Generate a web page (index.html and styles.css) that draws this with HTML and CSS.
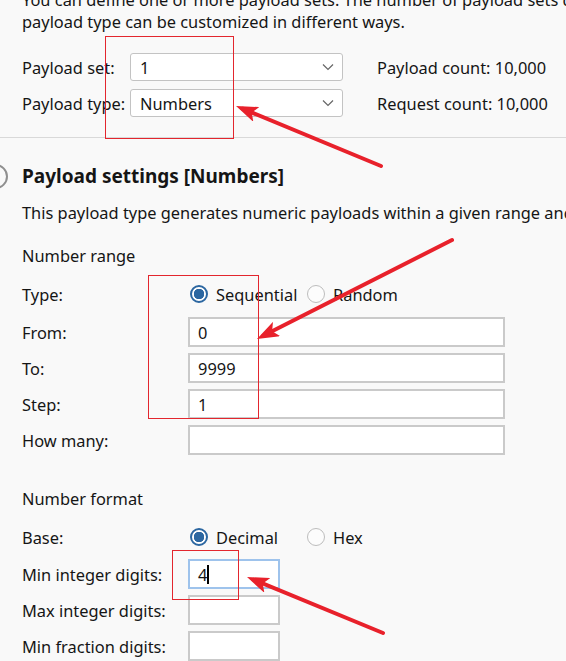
FILE: index.html
```html
<!DOCTYPE html>
<html>
<head>
<meta charset="utf-8">
<link rel="stylesheet" href="styles.css">
</head>
<body>
<div class="page">
  <div class="intro">
    <div class="line">You can define one or more payload sets. The number of payload sets depends on the attack type defined in the Positions tab. Various payload types are available for each payload set, and each</div>
    <div class="line">payload type can be customized in different ways.</div>
  </div>

  <div class="sets">
    <div class="set-row">
      <span class="set-label">Payload set:</span>
      <div class="select"><span>1</span><svg class="chev" width="12" height="8" viewBox="0 0 12 8"><path d="M1 1.5 L6 6.5 L11 1.5" fill="none" stroke="#666" stroke-width="1.2"/></svg></div>
      <span class="count">Payload count: 10,000</span>
    </div>
    <div class="set-row">
      <span class="set-label">Payload type:</span>
      <div class="select"><span>Numbers</span><svg class="chev" width="12" height="8" viewBox="0 0 12 8"><path d="M1 1.5 L6 6.5 L11 1.5" fill="none" stroke="#666" stroke-width="1.2"/></svg></div>
      <span class="count">Request count: 10,000</span>
    </div>
  </div>

  <div class="divider"></div>

  <div class="section">
    <div class="section-head">
      <span class="toggle"></span>
      <h2 class="title">Payload settings [Numbers]</h2>
    </div>
    <div class="desc">This payload type generates numeric payloads within a given range and in a specified format.</div>

    <div class="group-title">Number range</div>
    <div class="form">
      <div class="row radio-row">
        <span class="lbl">Type:</span>
        <div class="options">
          <span class="opt first"><span class="radio on"></span>Sequential</span>
          <span class="opt"><span class="radio"></span>Random</span>
        </div>
      </div>
      <div class="row first-input">
        <span class="lbl">From:</span>
        <div class="field wide">0</div>
      </div>
      <div class="row">
        <span class="lbl">To:</span>
        <div class="field wide">9999</div>
      </div>
      <div class="row">
        <span class="lbl">Step:</span>
        <div class="field wide">1</div>
      </div>
      <div class="row">
        <span class="lbl">How many:</span>
        <div class="field wide"></div>
      </div>
    </div>

    <div class="group-title format">Number format</div>
    <div class="form">
      <div class="row radio-row">
        <span class="lbl">Base:</span>
        <div class="options">
          <span class="opt first"><span class="radio on"></span>Decimal</span>
          <span class="opt"><span class="radio"></span>Hex</span>
        </div>
      </div>
      <div class="row first-input-b">
        <span class="lbl">Min integer digits:</span>
        <div class="field narrow focus">4<span class="caret"></span></div>
      </div>
      <div class="row">
        <span class="lbl">Max integer digits:</span>
        <div class="field narrow"></div>
      </div>
      <div class="row">
        <span class="lbl">Min fraction digits:</span>
        <div class="field narrow"></div>
      </div>
    </div>
  </div>

  <svg class="annot" width="566" height="661" viewBox="0 0 566 661">
    <defs>
      <marker id="ah" viewBox="0 0 22 16" refX="15" refY="8" markerWidth="22" markerHeight="16" orient="auto" markerUnits="userSpaceOnUse">
        <path d="M0 0 L22 8 L0 16 L5 8 Z" fill="#e8212b"/>
      </marker>
    </defs>
    <rect x="105.5" y="36.5" width="128" height="102" fill="none" stroke="#e3262e" stroke-width="1"/>
    <rect x="148.5" y="275.5" width="110" height="143" fill="none" stroke="#e3262e" stroke-width="1"/>
    <rect x="172.5" y="550.5" width="66" height="49" fill="none" stroke="#e3262e" stroke-width="1"/>
    <line x1="381" y1="166" x2="242.5" y2="108.7" stroke="#e8212b" stroke-width="4" stroke-linecap="round" marker-end="url(#ah)"/>
    <line x1="452" y1="240" x2="263.2" y2="335.8" stroke="#e8212b" stroke-width="4" stroke-linecap="round" marker-end="url(#ah)"/>
    <line x1="383" y1="633" x2="253.5" y2="579.7" stroke="#e8212b" stroke-width="4" stroke-linecap="round" marker-end="url(#ah)"/>
  </svg>
</div>
</body>
</html>
```

FILE: styles.css
```css
html, body {
  margin: 0;
  padding: 0;
}
body {
  background: #f9f9f9;
  font-family: "Noto Sans", "Open Sans", sans-serif;
  font-size: 16.4px;
  color: #151515;
  overflow: hidden;
  width: 566px;
  height: 661px;
}
.page {
  position: relative;
  width: 566px;
  height: 661px;
  overflow: hidden;
}
.intro {
  margin-top: -11px;
  padding-left: 22px;
}
.line {
  white-space: nowrap;
  line-height: 22px;
  height: 22px;
}
.sets {
  margin-top: 20px;
  padding-left: 22px;
  display: flex;
  flex-direction: column;
  gap: 8px;
}
.set-row {
  display: flex;
  align-items: center;
  height: 28px;
}
.set-label {
  width: 108px;
  white-space: nowrap;
}
.select {
  box-sizing: border-box;
  width: 213px;
  height: 28px;
  background: #fff;
  border: 1px solid #c3c3c3;
  border-radius: 3px;
  display: flex;
  align-items: center;
  justify-content: space-between;
  padding: 0 8px 0 9px;
}
.chev {
  display: block;
}
.count {
  margin-left: 34px;
  white-space: nowrap;
}
.divider {
  margin-top: 20px;
  height: 1px;
  background: #d9d9d9;
}
.section {
  padding-left: 22px;
}
.section-head {
  margin-top: 26px;
  margin-left: -39px;
  display: flex;
  align-items: center;
  gap: 14px;
  height: 24px;
}
.toggle {
  box-sizing: border-box;
  width: 25px;
  height: 25px;
  border: 2px solid #8f8f8f;
  border-radius: 50%;
  flex: none;
}
.title {
  margin: 0;
  font-size: 19px;
  font-weight: 700;
  line-height: 24px;
  white-space: nowrap;
}
.desc {
  margin-top: 14px;
  line-height: 22px;
  white-space: nowrap;
}
.group-title {
  margin-top: 21px;
  line-height: 22px;
}
.group-title.format {
  margin-top: 33px;
}
.form {
  display: flex;
  flex-direction: column;
  gap: 6px;
}
.row {
  display: flex;
  align-items: center;
  height: 30px;
}
.radio-row {
  height: 28px;
  margin-top: 13px;
}
.row.first-input {
  margin-top: 3px;
}
.row.first-input-b {
  margin-top: 2px;
}
.lbl {
  width: 166px;
  flex: none;
  white-space: nowrap;
}
.options {
  display: flex;
  align-items: center;
  padding-left: 2px;
}
.opt {
  display: flex;
  align-items: center;
  gap: 8px;
  white-space: nowrap;
}
.opt.first {
  width: 117px;
}
.radio {
  box-sizing: border-box;
  width: 18px;
  height: 18px;
  border-radius: 50%;
  border: 1.5px solid #bdbdbd;
  background: #fcfcfc;
  flex: none;
}
.radio.on {
  border: 2px solid #2c67a1;
  background: radial-gradient(circle, #2c67a1 0 5px, #fff 5.5px);
}
.field {
  box-sizing: border-box;
  height: 30px;
  background: #fff;
  border: 2px solid #cacaca;
  display: flex;
  align-items: center;
  padding-left: 8px;
}
.field.wide {
  width: 317px;
}
.field.narrow {
  width: 92px;
}
.field.focus {
  border-color: #9ec3ec;
}
.caret {
  display: inline-block;
  width: 2px;
  height: 19px;
  background: #000;
  margin-left: 0px;
}
.annot {
  position: absolute;
  left: 0;
  top: 0;
  pointer-events: none;
}
```
